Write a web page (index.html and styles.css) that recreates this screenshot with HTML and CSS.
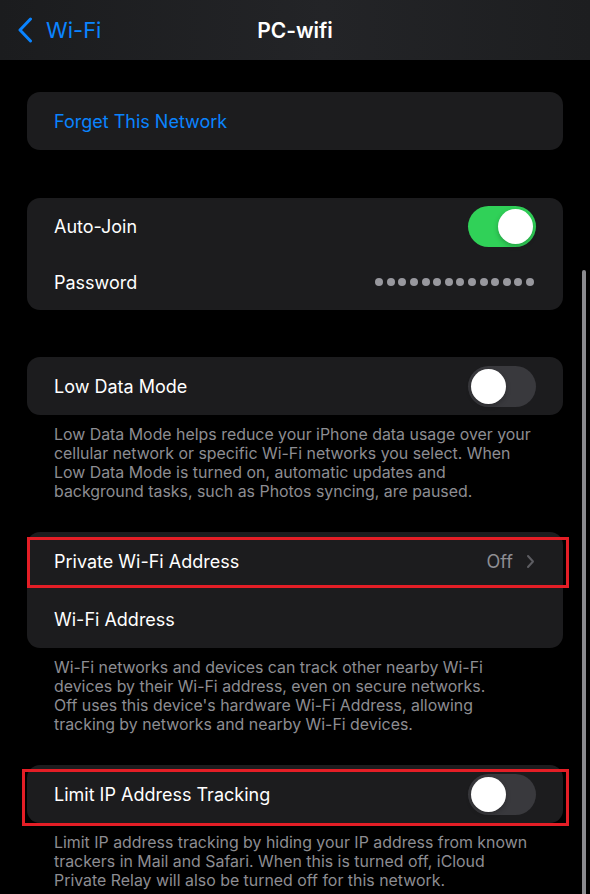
FILE: index.html
```html
<!DOCTYPE html>
<html lang="en">

<head>
  <meta charset="UTF-8">
  <meta name="viewport" content="width=device-width, initial-scale=1.0">
  <title>PC-wifi</title>
  <link rel="stylesheet" href="styles.css">
</head>

<body>
  <header class="navbar">
    <a class="back" href="#">
      <svg class="back-icon" viewBox="0 0 16 26" width="16" height="26">
        <path d="M13.5 2 L3 13 L13.5 24" fill="none" stroke="currentColor" stroke-width="3" stroke-linecap="round" stroke-linejoin="round" />
      </svg>
      <span>Wi-Fi</span>
    </a>
    <h1 class="title">PC-wifi</h1>
    <span></span>
  </header>

  <main class="content">
    <section class="group first">
      <div class="card">
        <div class="row"><span class="link">Forget This Network</span></div>
      </div>
    </section>

    <section class="group join">
      <div class="card">
        <div class="row short">
          <span class="label">Auto-Join</span>
          <span class="toggle on"><i class="knob"></i></span>
        </div>
        <div class="row short">
          <span class="label">Password</span>
          <span class="dots">
            <i></i><i></i><i></i><i></i><i></i><i></i><i></i>
            <i></i><i></i><i></i><i></i><i></i><i></i><i></i>
          </span>
        </div>
      </div>
    </section>

    <section class="group">
      <div class="card">
        <div class="row">
          <span class="label">Low Data Mode</span>
          <span class="toggle"><i class="knob"></i></span>
        </div>
      </div>
      <p class="note">Low Data Mode helps reduce your iPhone data usage over your<br>
        cellular network or specific Wi-Fi networks you select. When<br>
        Low Data Mode is turned on, automatic updates and<br>
        background tasks, such as Photos syncing, are paused.</p>
    </section>

    <section class="group">
      <div class="card">
        <div class="row">
          <span class="label">Private Wi-Fi Address</span>
          <span class="detail">Off
            <svg class="chevron" viewBox="0 0 9 15" width="9" height="15">
              <path d="M2 2 L7 7.5 L2 13" fill="none" stroke="currentColor" stroke-width="2" stroke-linecap="round" stroke-linejoin="round" />
            </svg>
          </span>
          <span class="mark mark-private"></span>
        </div>
        <div class="row">
          <span class="label">Wi-Fi Address</span>
        </div>
      </div>
      <p class="note">Wi-Fi networks and devices can track other nearby Wi-Fi<br>
        devices by their Wi-Fi address, even on secure networks.<br>
        Off uses this device's hardware Wi-Fi Address, allowing<br>
        tracking by networks and nearby Wi-Fi devices.</p>
    </section>

    <section class="group">
      <div class="card">
        <div class="row">
          <span class="label">Limit IP Address Tracking</span>
          <span class="toggle"><i class="knob"></i></span>
          <span class="mark mark-limit"></span>
        </div>
      </div>
      <p class="note">Limit IP address tracking by hiding your IP address from known<br>
        trackers in Mail and Safari. When this is turned off, iCloud<br>
        Private Relay will also be turned off for this network.</p>
    </section>
  </main>

  <div class="scrollbar"></div>
</body>

</html>
```

FILE: styles.css
```css
* {
  box-sizing: border-box;
}

body {
  margin: 0;
  height: 894px;
  overflow: hidden;
  background: #000;
  color: #fff;
  font-family: Inter, "Liberation Sans", sans-serif;
}

.navbar {
  height: 60px;
  display: grid;
  grid-template-columns: 1fr auto 1fr;
  align-items: center;
  background: linear-gradient(to right, #1b1c1e, #232427 55%, #1d1e20);
}

.back {
  display: flex;
  align-items: center;
  color: #0a84ff;
  text-decoration: none;
  font-size: 22px;
  padding-left: 17px;
  gap: 13px;
}

.back-icon {
  display: block;
}

.title {
  margin: 0;
  font-size: 21px;
  font-weight: 600;
}

.content {
  padding: 0 27px;
}

.group {
  margin-top: 31px;
}

.group.first {
  margin-top: 32px;
}

.group.join {
  margin-top: 48px;
}

.group.join + .group {
  margin-top: 47px;
}

.card {
  background: #1c1c1e;
  border-radius: 13px;
}

.row {
  position: relative;
  height: 58px;
  padding: 0 27px;
  display: flex;
  align-items: center;
  justify-content: space-between;
  font-size: 18px;
}

.row.short {
  height: 56px;
}

.link {
  color: #0a84ff;
}

.toggle {
  width: 68px;
  height: 41px;
  border-radius: 21px;
  background: #39393d;
  padding: 3px;
  display: flex;
}

.toggle.on {
  background: #30d158;
  justify-content: flex-end;
}

.knob {
  width: 35px;
  height: 35px;
  border-radius: 50%;
  background: #fff;
  box-shadow: 0 2px 5px rgba(0, 0, 0, 0.25);
}

.dots {
  display: flex;
  gap: 3.6px;
  margin-right: 2px;
}

.dots i {
  width: 8px;
  height: 8px;
  border-radius: 50%;
  background: #98989e;
}

.detail {
  display: flex;
  align-items: center;
  gap: 13px;
  color: #8e8e93;
  margin-right: 1px;
}

.chevron {
  display: block;
  color: #5d5d62;
}

.note {
  margin: 10px 0 0;
  padding: 0 27px;
  font-size: 15.9px;
  line-height: 19px;
  color: #8d8d92;
  white-space: nowrap;
}

.mark {
  position: absolute;
  border: 3px solid #e41e26;
  pointer-events: none;
}

.mark-private {
  top: 5px;
  bottom: 2px;
  left: 0;
  right: -6px;
}

.mark-limit {
  top: 4px;
  bottom: -3px;
  left: -5px;
  right: -6px;
}

.scrollbar {
  position: absolute;
  top: 270px;
  right: 4px;
  width: 4px;
  height: 640px;
  border-radius: 2px;
  background: #8a8a8e;
}
```
